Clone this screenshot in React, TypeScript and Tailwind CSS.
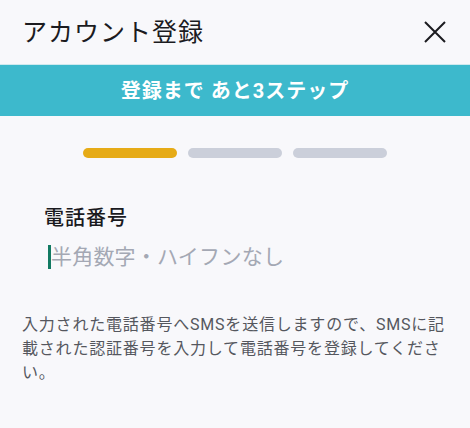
import React from "react";

export default function App() {
  const font = { fontFamily: 'Roboto, "Noto Sans CJK JP", sans-serif' };
  return (
    <div className="w-[470px] h-[428px] bg-[#f8f8fb] flex flex-col overflow-hidden" style={font}>
      <div className="h-[64px] flex items-center justify-between pl-[22px] pr-[24px]">
        <h1 className="text-[25px] leading-none tracking-[1px] text-[#1b1b1f] font-normal">アカウント登録</h1>
        <svg width="22" height="22" viewBox="0 0 22 22" fill="none">
          <path d="M1 1L21 21M21 1L1 21" stroke="#1b1b1f" strokeWidth="2" />
        </svg>
      </div>
      <div className="h-[52px] bg-[#3db9cc] border-t border-[#cfe9ee] flex items-center justify-center">
        <span className="text-white text-[20px] font-bold leading-none tracking-[1px]">登録まで あと3ステップ</span>
      </div>
      <div className="flex justify-center gap-[11px] pt-[32px] pr-[1px]">
        <div className="w-[94px] h-[10px] rounded-full bg-[#e6ab17]" />
        <div className="w-[94px] h-[10px] rounded-full bg-[#cbcfda]" />
        <div className="w-[94px] h-[10px] rounded-full bg-[#cbcfda]" />
      </div>
      <div className="pl-[44px] pt-[46px] flex flex-col">
        <div className="text-[20px] font-medium leading-[28px] tracking-[1px] text-[#1a1a1e]">電話番号</div>
        <div className="mt-[12px] flex items-center h-[26px]">
          <div className="w-[3px] h-[24px] bg-[#127a62] ml-[4px]" />
          <span className="text-[21px] leading-none tracking-[0.2px] text-[#a4a8b4]">半角数字・ハイフンなし</span>
        </div>
      </div>
      <p className="px-[22px] pt-[43px] text-[16px] leading-[24px] tracking-[0.8px] text-[#55575e]">
        入力された電話番号へSMSを送信しますので、SMSに記載された認証番号を入力して電話番号を登録してください。
      </p>
    </div>
  );
}
